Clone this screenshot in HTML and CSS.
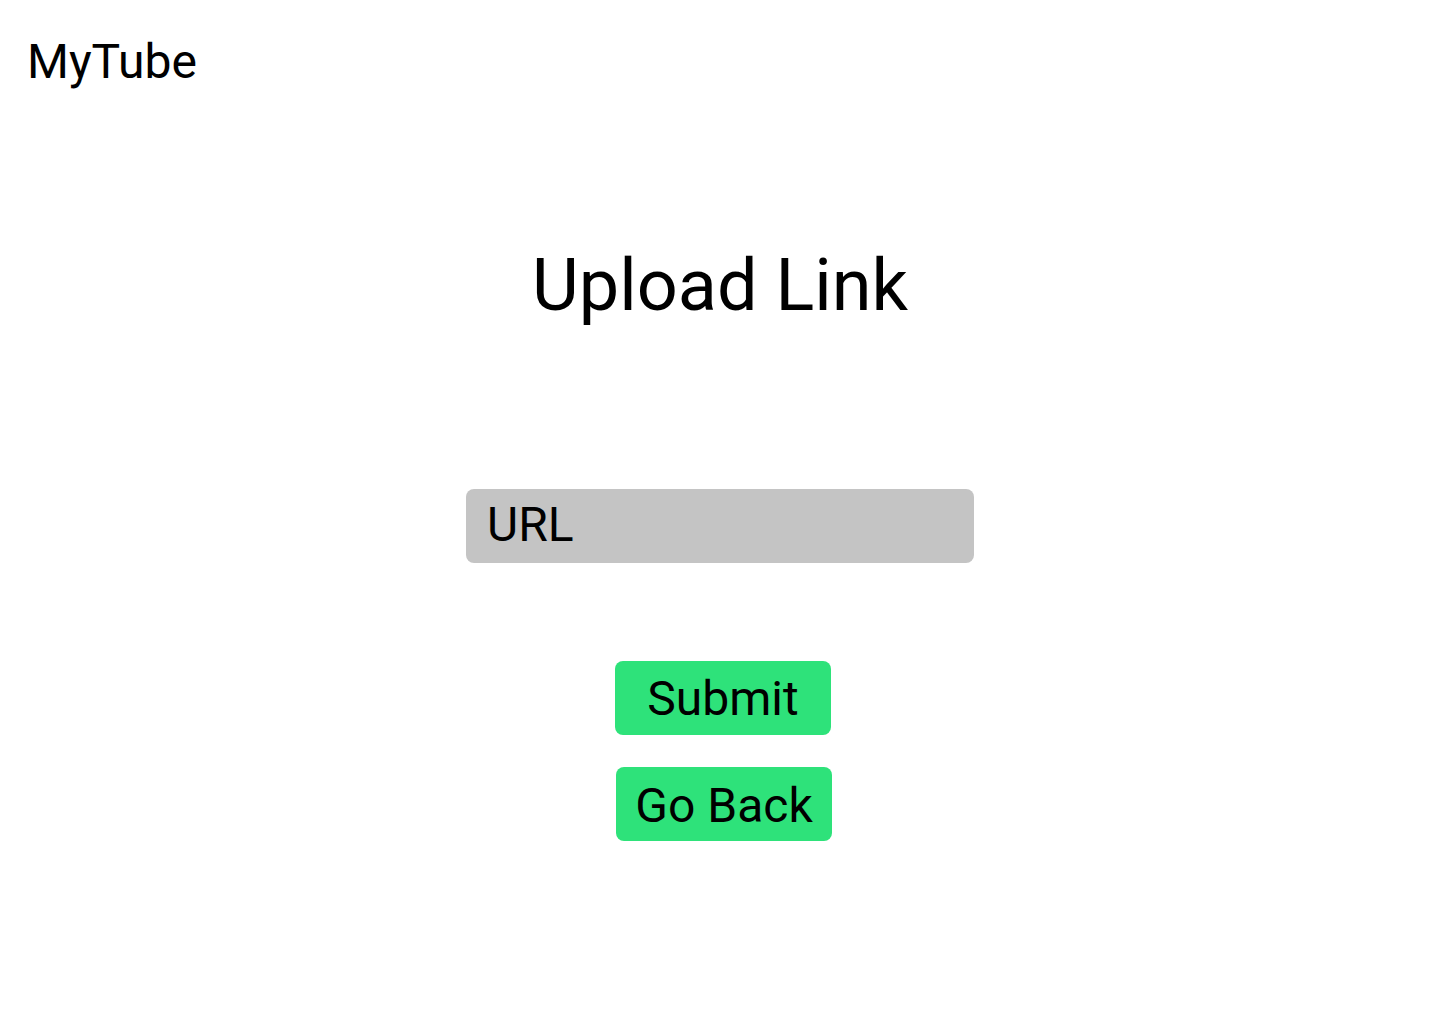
FILE: index.html
```html
<!DOCTYPE html>
<html lang="en">
<head>
<meta charset="utf-8">
<title>MyTube - Upload Link</title>
<link rel="stylesheet" href="styles.css">
</head>
<body>
  <header class="topbar">
    <div class="brand">MyTube</div>
  </header>
  <main class="upload">
    <h1 class="title">Upload Link</h1>
    <form class="upload-form" onsubmit="return false;">
      <input class="url-input" type="text" placeholder="URL">
      <div class="actions">
        <button class="btn btn-submit" type="submit">Submit</button>
        <button class="btn btn-back" type="button">Go Back</button>
      </div>
    </form>
  </main>
</body>
</html>
```

FILE: styles.css
```css
html, body {
  margin: 0;
  padding: 0;
  background: #ffffff;
  color: #000000;
  font-family: Roboto, "Liberation Sans", Arial, sans-serif;
}

.topbar {
  padding: 34px 0 0 27px;
}

.brand {
  font-size: 48px;
  line-height: 56px;
}

.upload {
  display: flex;
  flex-direction: column;
  align-items: center;
}

.title {
  margin: 154px 0 0 0;
  font-size: 72px;
  font-weight: 400;
  line-height: 84px;
}

.upload-form {
  display: flex;
  flex-direction: column;
  align-items: center;
  margin-top: 161px;
}

.url-input {
  box-sizing: border-box;
  width: 508px;
  height: 74px;
  border: none;
  border-radius: 8px;
  background: #c4c4c4;
  padding: 0 20px 3px 21px;
  font-family: inherit;
  font-size: 48px;
  color: #000;
  outline: none;
}

.url-input::placeholder {
  color: #000;
  opacity: 1;
}

.actions {
  display: flex;
  flex-direction: column;
  align-items: center;
  gap: 32px;
  margin-top: 98px;
  padding-left: 6px;
}

.btn {
  box-sizing: border-box;
  width: 216px;
  height: 74px;
  border: none;
  border-radius: 8px;
  background: #2ee27a;
  color: #000;
  font-family: inherit;
  font-size: 48px;
  padding: 0;
  cursor: pointer;
}

.btn-back {
  margin-left: 2px;
  padding-top: 2px;
}
```
